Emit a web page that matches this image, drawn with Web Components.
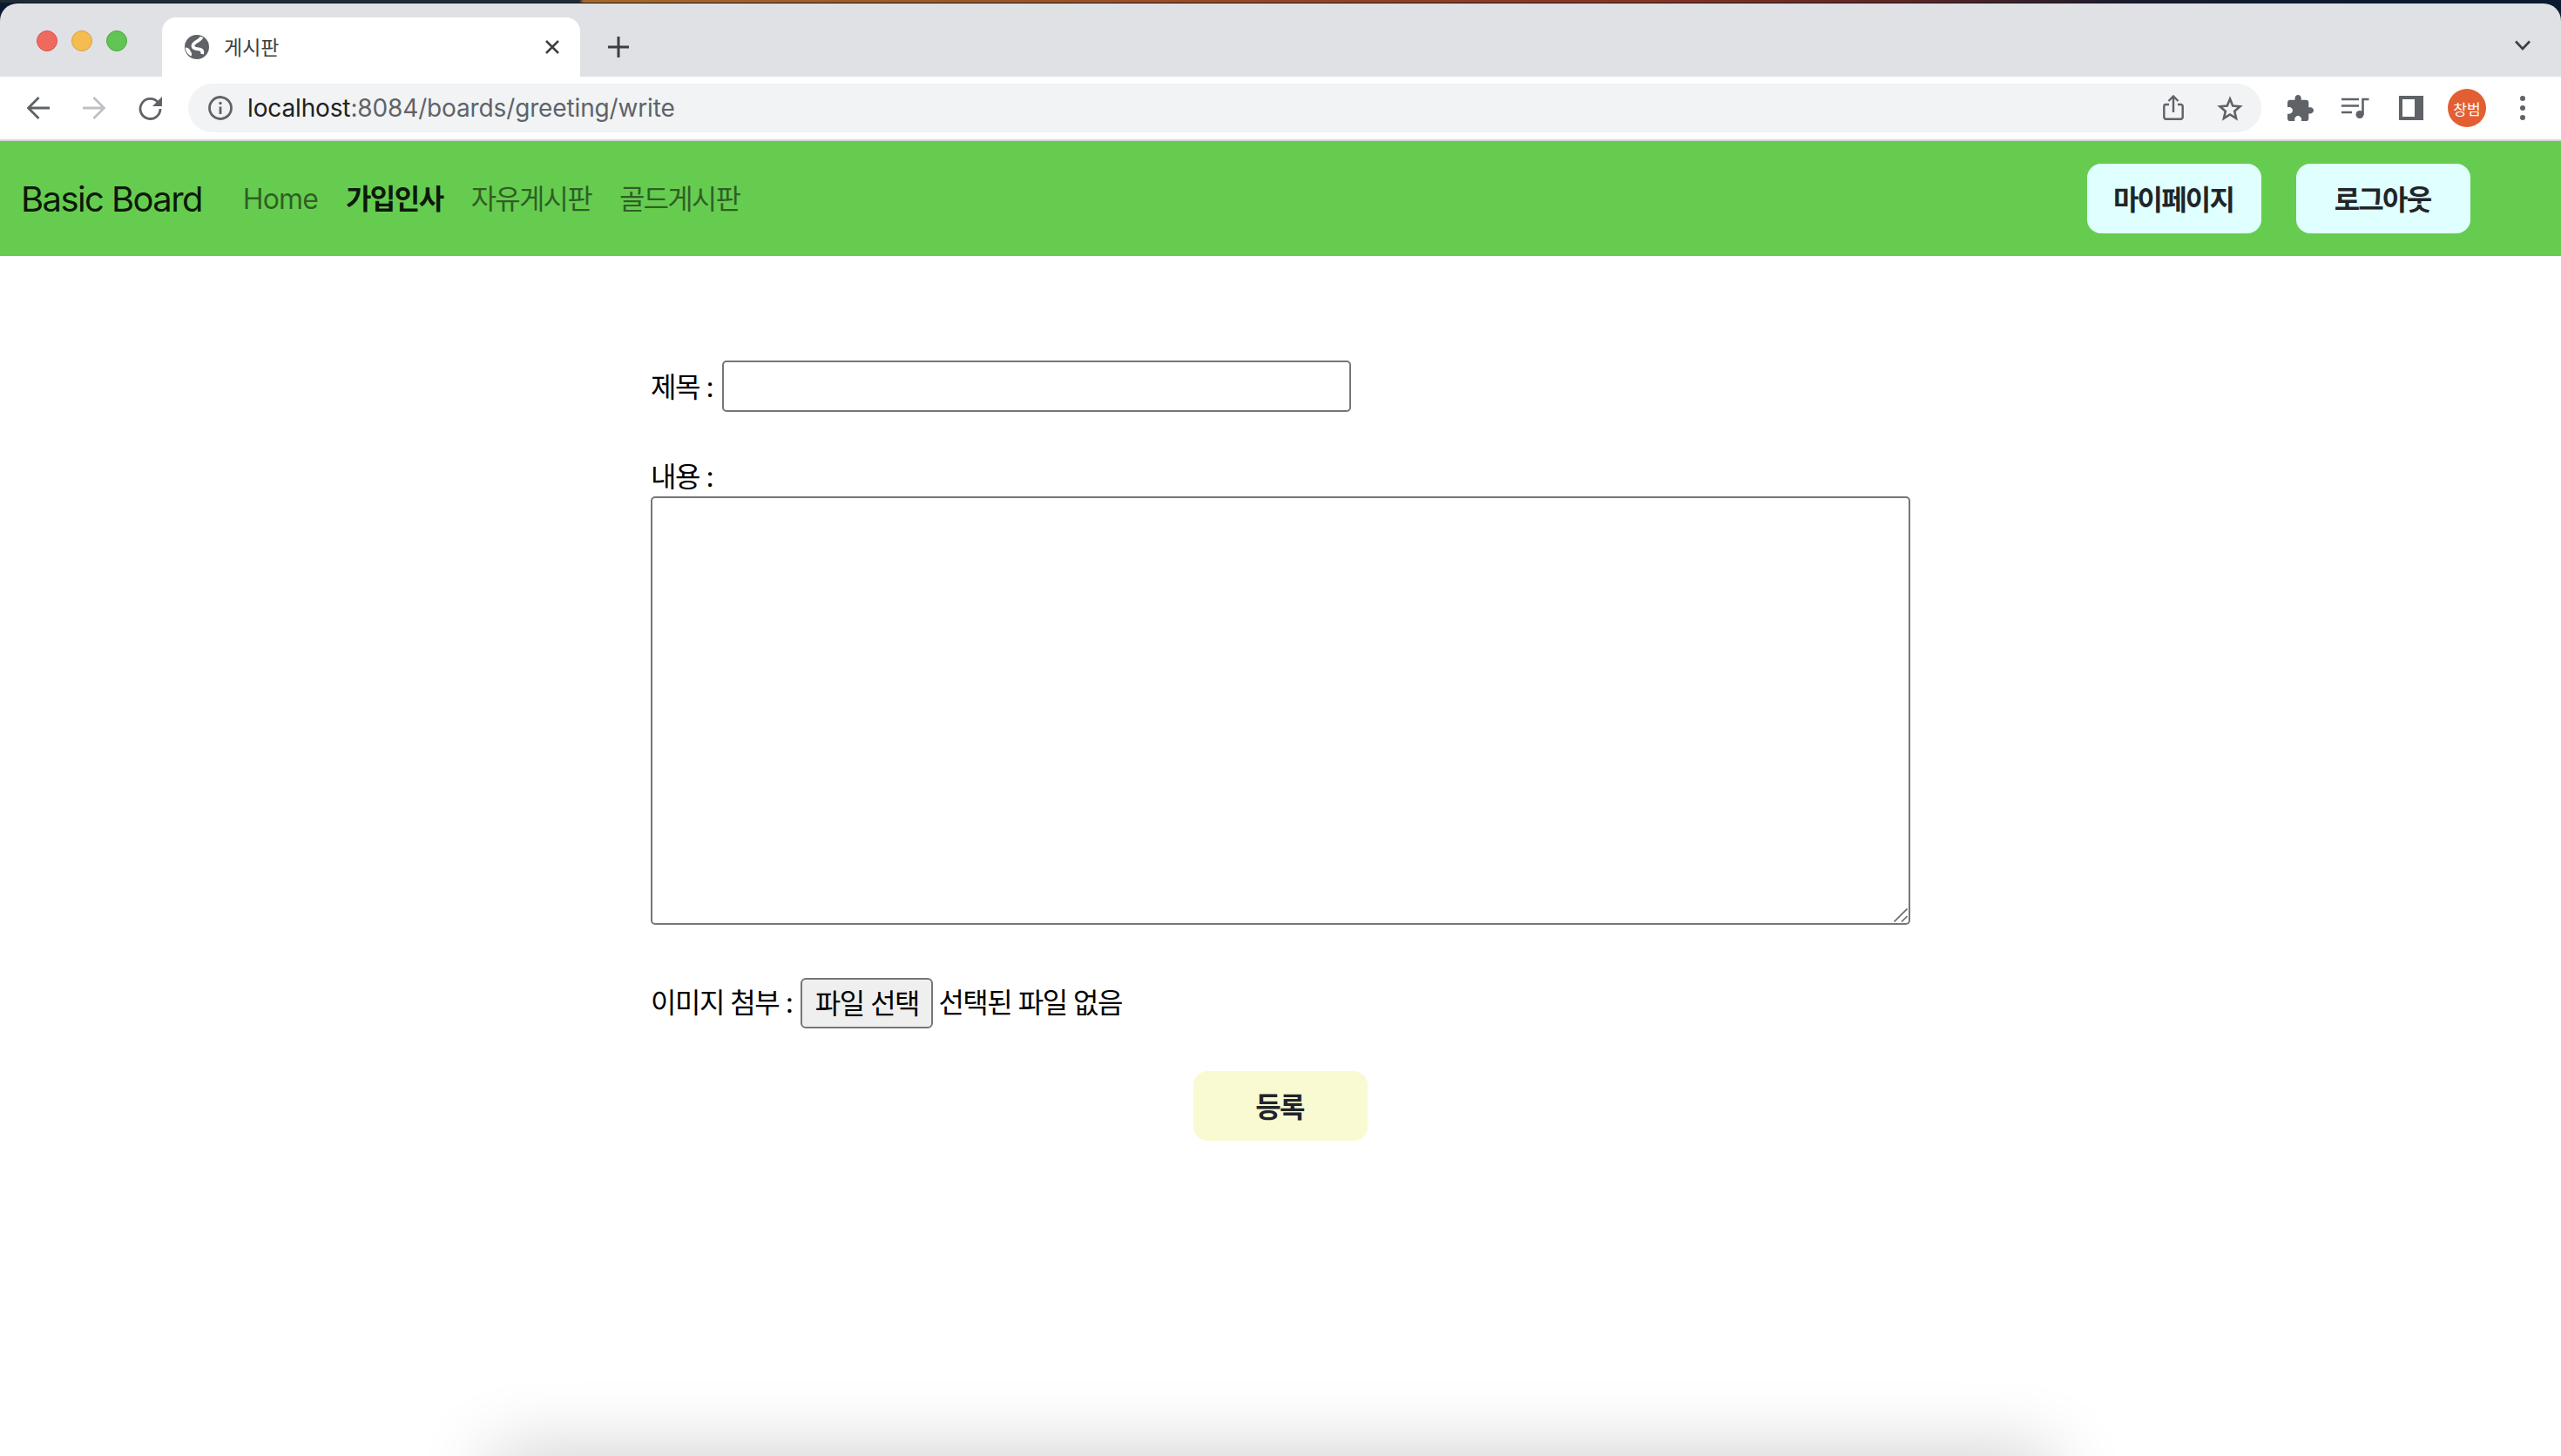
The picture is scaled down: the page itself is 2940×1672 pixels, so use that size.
<!DOCTYPE html>
<html lang="ko">
<head>
<meta charset="utf-8">
<title>게시판</title>
<style>
    html, body {
        margin: 0;
        height: 100%;
    }

    body {
        display: flex;
        flex-direction: column;
        height: 1672px;
        overflow: hidden;
        position: relative;
        background: #fff;
        font-family: Inter, "Noto Sans CJK KR", sans-serif;
    }
</style>
</head>
<body>
    <browser-chrome tab-title="게시판" host="localhost" path=":8084/boards/greeting/write" profile="창범"></browser-chrome>
    <site-navbar brand="Basic Board">
        <nav-link latin>Home</nav-link>
        <nav-link active>가입인사</nav-link>
        <nav-link>자유게시판</nav-link>
        <nav-link>골드게시판</nav-link>
        <soft-button slot="actions">마이페이지</soft-button>
        <soft-button slot="actions">로그아웃</soft-button>
    </site-navbar>
    <write-form></write-form>
    <dock-shadow></dock-shadow>

<script>
const chromeTemplate = document.createElement("template");
chromeTemplate.innerHTML = `
    <style>
        :host {
            display: block;
            flex: none;
            background: #0c1a30;
            color: #5f6368;
        }

        .top {
            height: 3px;
            background: linear-gradient(90deg, #1e2c33 0, #1e2c33 665px, #a5682a 670px, #9a4f25 1300px, #86331f 1900px, #5e2522 2200px, #1a1b2c 2450px, #0c1a30 2700px);
        }

        .edge {
            height: 1px;
        }

        .strip {
            display: flex;
            height: 84px;
            background: #dfe1e5;
            border-radius: 20px 20px 0 0;
        }

        .lights {
            display: flex;
            gap: 16px;
            width: 186px;
            padding: 31px 0 0 42px;
            box-sizing: border-box;
        }

        .lights i {
            width: 24px;
            height: 24px;
            box-sizing: border-box;
            border-radius: 50%;
            border: 1px solid;
        }

        .tab {
            display: flex;
            align-items: center;
            box-sizing: border-box;
            width: 480px;
            height: 68px;
            margin-top: 16px;
            padding: 0 23px 0 26px;
            background: #fff;
            border-radius: 16px 16px 0 0;
            color: #3c4043;
            font-size: 23px;
            font-family: "Noto Sans CJK KR", sans-serif;
        }

        .tab span {
            flex: 1;
            margin-left: 17px;
            padding-bottom: 3px;
        }

        .plus {
            margin: 38px 0 0 32px;
        }

        .chevron {
            margin: 42px 35px 0 auto;
        }

        .bar {
            display: flex;
            align-items: center;
            height: 72px;
            box-sizing: border-box;
            background: #fff;
        }

        .nav-icon {
            display: block;
            flex: none;
        }

        .omnibox {
            display: flex;
            align-items: center;
            flex: none;
            box-sizing: border-box;
            width: 2380px;
            height: 56px;
            margin-left: 29px;
            padding: 0 21px 0 23px;
            background: #f1f3f4;
            border-radius: 28px;
        }

        .url {
            flex: 1;
            margin-left: 17px;
            color: #5f6368;
            font-size: 28px;
            letter-spacing: -.14px;
            white-space: nowrap;
        }

        .url b {
            color: #202124;
            font-weight: 400;
        }

        .avatar {
            display: flex;
            align-items: center;
            justify-content: center;
            flex: none;
            width: 44px;
            height: 44px;
            border-radius: 50%;
            background: #e35f33;
            color: #fff;
            font-size: 17px;
            font-family: "Noto Sans CJK KR", sans-serif;
        }

        .rule {
            height: 2px;
            background: #d3d5d8;
        }
    </style>
    <div class="top"></div>
    <div class="edge"></div>
    <div class="strip">
        <div class="lights">
            <i style="background:#ee6a5f;border-color:#d9524a"></i>
            <i style="background:#f5bd4f;border-color:#dba03c"></i>
            <i style="background:#61c454;border-color:#4ca83f"></i>
        </div>
        <div class="tab">
            <svg class="nav-icon" width="28" height="28" viewBox="0 0 28 28">
                <circle cx="14" cy="14" r="14" fill="#5f6368"/>
                <path d="M19.500 2.500C18 7.500 10 7.500 9.500 12.500 9.200 16 14 16 18 16.800c2 .4 2.800 2.200 2 5.200" fill="none" stroke="#fff" stroke-width="3.800"/>
                <path d="M.8 14.500c2.800.2 4.700 1.300 5.500 3.500.5 1.500 1.500 2 1.800 3.300.2 1-.1 2-.6 3.200C3.500 22.500 1 19 .8 14.500z" fill="#fff"/>
            </svg>
            <span id="title"></span>
            <svg class="nav-icon" width="18" height="18" viewBox="0 0 18 18" fill="none" stroke="#3c4043" stroke-width="2.500">
                <path d="M2 2l14 14M16 2L2 16"/>
            </svg>
        </div>
        <svg class="plus" width="24" height="24" viewBox="0 0 24 24" fill="none" stroke="#3c4043" stroke-width="3">
            <path d="M12 0v24M0 12h24"/>
        </svg>
        <svg class="chevron" width="18" height="12" viewBox="0 0 18 12" fill="none" stroke="#3c4043" stroke-width="2.600">
            <path d="M1 1.500l8 8.500 8-8.500"/>
        </svg>
    </div>
    <div class="bar">
        <svg class="nav-icon" style="margin-left:31px" width="26" height="26" viewBox="0 0 26 26" fill="none" stroke="#5f6368" stroke-width="2.800">
            <path d="M26 13H2M13.500 1L1.500 13l12 12"/>
        </svg>
        <svg class="nav-icon" style="margin-left:38px" width="26" height="26" viewBox="0 0 26 26" fill="none" stroke="#bdc1c6" stroke-width="2.800">
            <path d="M0 13h24M12.500 1l12 12-12 12"/>
        </svg>
        <svg class="nav-icon" style="margin-left:38px" width="28" height="28" viewBox="0 0 28 28">
            <path d="M22.800 8.200A11.500 11.500 0 1 0 25 15" fill="none" stroke="#5f6368" stroke-width="2.800"/>
            <path d="M27 1v11H16z" fill="#5f6368"/>
        </svg>
        <div class="omnibox">
            <svg class="nav-icon" width="28" height="28" viewBox="0 0 28 28" fill="none" stroke="#5f6368">
                <circle cx="14" cy="14" r="12.500" stroke-width="2.800"/>
                <path d="M14 12.500V21" stroke-width="2.800"/>
                <circle cx="14" cy="8.500" r="1.700" fill="#5f6368" stroke="none"/>
            </svg>
            <div class="url"><b id="host"></b><span id="path"></span></div>
            <svg class="nav-icon" style="margin-right:2px" width="24" height="30" viewBox="0 0 24 30" fill="none" stroke="#5f6368" stroke-width="2.400">
                <path d="M7 11H3.500A2.200 2.200 0 0 0 1.300 13.200v12.300a2.200 2.200 0 0 0 2.200 2.200h17a2.200 2.200 0 0 0 2.200-2.200V13.200A2.200 2.200 0 0 0 20.500 11H17"/>
                <path d="M12 20V2M6.500 7L12 1.500 17.500 7"/>
            </svg>
            <svg class="nav-icon" style="margin-left:36px" width="30" height="29" viewBox="0 0 30 29" fill="none" stroke="#5f6368" stroke-width="2.600" stroke-linejoin="miter">
                <path d="M15 3.600l3.200 7.900 8.300.7-6.300 5.500 1.900 8.200L15 21.500l-7.100 4.400 1.900-8.200-6.300-5.500 8.300-.7z"/>
            </svg>
        </div>
        <svg class="nav-icon" style="margin-left:30px" width="30" height="30" viewBox="2 1 21 21" fill="#5f6368">
            <path d="M20.500 11H19V7c0-1.100-.9-2-2-2h-4V3.500C13 2.120 11.880 1 10.500 1S8 2.120 8 3.500V5H4c-1.100 0-1.990.9-1.990 2v3.800H3.500c1.490 0 2.700 1.210 2.700 2.700s-1.210 2.700-2.700 2.700H2V20c0 1.100.9 2 2 2h3.800v-1.500c0-1.490 1.210-2.700 2.700-2.700 1.490 0 2.700 1.210 2.700 2.700V22H17c1.100 0 2-.9 2-2v-4h1.500c1.380 0 2.500-1.120 2.500-2.500S21.880 11 20.500 11z"/>
        </svg>
        <svg class="nav-icon" style="margin-left:32px" width="32" height="24" viewBox="0 0 32 24" fill="none" stroke="#5f6368" stroke-width="2.600">
            <path d="M0 2h20M0 9.500h20M0 17h12"/>
            <path d="M24.500 20V2h7" stroke-width="2.600"/>
            <circle cx="21" cy="19.500" r="4.500" fill="#5f6368" stroke="none"/>
        </svg>
        <svg class="nav-icon" style="margin-left:34px" width="28" height="28" viewBox="0 0 28 28">
            <path d="M0 0h28v28H0z" fill="#5f6368"/>
            <path d="M4 4h14v20H4z" fill="#fff"/>
        </svg>
        <div class="avatar" style="margin-left:28px" id="profile"></div>
        <svg class="nav-icon" style="margin-left:38px" width="8" height="30" viewBox="0 0 8 30" fill="#5f6368">
            <circle cx="4" cy="4" r="3"/><circle cx="4" cy="15" r="3"/><circle cx="4" cy="26" r="3"/>
        </svg>
    </div>
    <div class="rule"></div>
`;

/**
 * The browser window around the page: tab strip and toolbar.
 */
class BrowserChrome extends HTMLElement {
    constructor() {
        super();
        this.attachShadow({mode: "open"});
        this.shadowRoot.appendChild(chromeTemplate.content.cloneNode(true));
    }

    connectedCallback() {
        this.shadowRoot.getElementById("title").textContent = this.getAttribute("tab-title");
        this.shadowRoot.getElementById("host").textContent = this.getAttribute("host");
        this.shadowRoot.getElementById("path").textContent = this.getAttribute("path");
        this.shadowRoot.getElementById("profile").textContent = this.getAttribute("profile");
    }
}

const navbarTemplate = document.createElement("template");
navbarTemplate.innerHTML = `
    <style>
        :host {
            display: flex;
            flex: none;
            align-items: center;
            height: 132px;
            padding: 0 104px 0 24px;
            background: #66cc4f;
        }

        .brand {
            margin-right: 31px;
            color: rgba(0, 0, 0, .9);
            font-size: 40px;
            letter-spacing: -1.6px;
        }

        .links {
            display: flex;
            flex: 1;
            align-items: center;
        }

        .actions {
            display: flex;
            gap: 40px;
        }
    </style>
    <div class="brand" id="brand"></div>
    <div class="links"><slot></slot></div>
    <div class="actions"><slot name="actions"></slot></div>
`;

class SiteNavbar extends HTMLElement {
    constructor() {
        super();
        this.attachShadow({mode: "open"});
        this.shadowRoot.appendChild(navbarTemplate.content.cloneNode(true));
    }

    connectedCallback() {
        this.shadowRoot.getElementById("brand").textContent = this.getAttribute("brand");
    }
}

const navLinkTemplate = document.createElement("template");
navLinkTemplate.innerHTML = `
    <style>
        :host {
            display: block;
            padding: 0 16px;
            color: rgba(0, 0, 0, .55);
            font-size: 32px;
            line-height: 47px;
            letter-spacing: -1.8px;
        }

        :host([latin]) {
            letter-spacing: -.9px;
        }

        :host([active]) {
            color: rgba(0, 0, 0, .9);
            font-weight: 700;
            letter-spacing: -1.5px;
        }
    </style>
    <slot></slot>
`;

class NavLink extends HTMLElement {
    constructor() {
        super();
        this.attachShadow({mode: "open"});
        this.shadowRoot.appendChild(navLinkTemplate.content.cloneNode(true));
    }
}

const softButtonTemplate = document.createElement("template");
softButtonTemplate.innerHTML = `
    <style>
        :host {
            display: flex;
            align-items: center;
            justify-content: center;
            box-sizing: border-box;
            width: 200px;
            height: 80px;
            padding: 0 2px 3px 0;
            border-radius: 16px;
            background: var(--soft-button-bg, #e0ffff);
            color: #212529;
            font-size: 32px;
            font-weight: 700;
            letter-spacing: -1.8px;
        }
    </style>
    <slot></slot>
`;

class SoftButton extends HTMLElement {
    constructor() {
        super();
        this.attachShadow({mode: "open"});
        this.shadowRoot.appendChild(softButtonTemplate.content.cloneNode(true));
    }
}

const formTemplate = document.createElement("template");
formTemplate.innerHTML = `
    <style>
        :host {
            display: block;
            flex: none;
            box-sizing: border-box;
            width: 1446px;
            margin: 120px auto 0;
            color: #000;
            font-size: 32px;
            letter-spacing: -1.5px;
        }

        .row {
            display: flex;
            align-items: center;
        }

        .row label, .row span {
            padding-bottom: 3px;
        }

        input {
            box-sizing: border-box;
            width: 722px;
            height: 59px;
            margin-left: 11px;
            padding: 0;
            border: 2px solid #767676;
            border-radius: 5px;
            background: #fff;
        }

        .label {
            height: 48px;
            margin-top: 49px;
            line-height: 51px;
        }

        .area {
            position: relative;
        }

        textarea {
            display: block;
            box-sizing: border-box;
            width: 1446px;
            height: 492px;
            margin: 0;
            padding: 0;
            border: 2px solid #767676;
            border-radius: 5px;
            background: #fff;
            resize: none;
        }

        .grip {
            position: absolute;
            right: 3px;
            bottom: 3px;
        }

        .file {
            margin-top: 61px;
        }

        .file span {
            padding-bottom: 6px;
        }

        .file-button {
            display: flex;
            align-items: center;
            justify-content: center;
            box-sizing: border-box;
            width: 152px;
            height: 58px;
            margin: 0 6px 0 10px;
            padding: 0 0 5px;
            border: 2px solid #767676;
            border-radius: 6px;
            background: #efefef;
            font: inherit;
            letter-spacing: inherit;
            color: #000;
        }

        .submit {
            display: flex;
            justify-content: center;
            margin-top: 49px;
            --soft-button-bg: #fafad2;
        }
    </style>
    <div class="row">
        <label for="title">제목 :</label>
        <input id="title" type="text">
    </div>
    <div class="label">내용 :</div>
    <div class="area">
        <textarea></textarea>
        <svg class="grip" width="16" height="16" viewBox="0 0 16 16" fill="none" stroke="#6b6b6b" stroke-width="1.600">
            <path d="M.5 15.500L15.500.5M9 15.500L15.500 9"/>
        </svg>
    </div>
    <div class="row file">
        <span>이미지 첨부 :</span>
        <button class="file-button" type="button">파일 선택</button>
        <span>선택된 파일 없음</span>
    </div>
    <div class="submit"><soft-button>등록</soft-button></div>
`;

/**
 * The write form of the board. Title, content and the image attachment.
 */
class WriteForm extends HTMLElement {
    constructor() {
        super();
        this.attachShadow({mode: "open"});
        this.shadowRoot.appendChild(formTemplate.content.cloneNode(true));
    }
}

const dockShadowTemplate = document.createElement("template");
dockShadowTemplate.innerHTML = `
    <style>
        :host {
            position: absolute;
            left: 565px;
            bottom: -60px;
            width: 1790px;
            height: 60px;
            background: #c4c4c4;
            box-shadow: 0 0 85px 0 #c4c4c4;
        }
    </style>
`;

// lies over the page, the shadow of the dock under the window
class DockShadow extends HTMLElement {
    constructor() {
        super();
        this.attachShadow({mode: "open"});
        this.shadowRoot.appendChild(dockShadowTemplate.content.cloneNode(true));
    }
}

customElements.define("browser-chrome", BrowserChrome);
customElements.define("site-navbar", SiteNavbar);
customElements.define("nav-link", NavLink);
customElements.define("soft-button", SoftButton);
customElements.define("write-form", WriteForm);
customElements.define("dock-shadow", DockShadow);
</script>
</body>
</html>
